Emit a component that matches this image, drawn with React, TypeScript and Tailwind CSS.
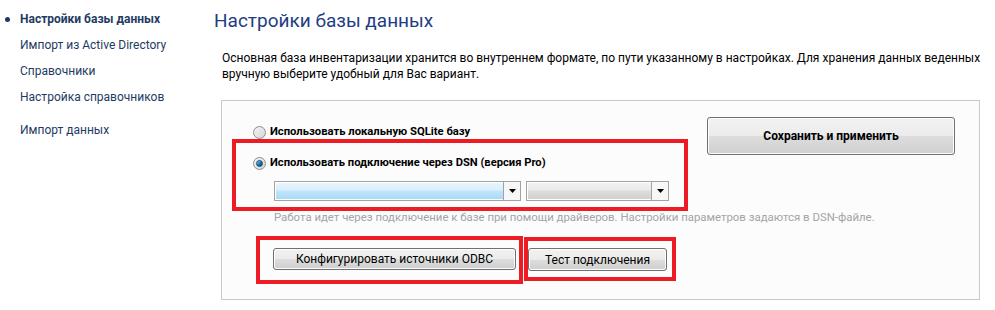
import React from 'react';

const navItems = [
    {label: 'Настройки базы данных', active: true},
    {label: 'Импорт из Active Directory'},
    {label: 'Справочники'},
    {label: 'Настройка справочников'},
    {label: 'Импорт данных', gap: true},
];

function Radio({checked}: { checked?: boolean }) {
    return (
        <span className="relative flex h-[13px] w-[13px] shrink-0 items-center justify-center rounded-full border border-[#8e8f8f] bg-gradient-to-br from-[#f4f4f4] to-[#d6d6d6]">
            {checked && (
                <span className="h-[7px] w-[7px] rounded-full border border-[#1b4a6e] bg-gradient-to-br from-[#8fd3fa] via-[#1f7ab8] to-[#0d3f63]"/>
            )}
        </span>
    );
}

function Select({width, blue}: { width: string; blue?: boolean }) {
    return (
        <div className={`flex h-[20px] ${width} border border-[#a3a3a3] shadow-[inset_0_0_0_1px_#ffffff] ${blue ? 'bg-[linear-gradient(#eaf6fd_0%,#d9f0fc_45%,#bee6fd_50%,#a7d9f5_100%)]' : 'bg-[linear-gradient(#f2f2f2_0%,#ebebeb_45%,#dddddd_50%,#cfcfcf_100%)]'}`}>
            <div className="flex-1"/>
            <div className="flex w-[17px] items-center justify-center border-l border-[#a3a3a3] bg-[#f7f7f7]">
                <svg width="7" height="4" viewBox="0 0 7 4"><path d="M0 0h7L3.5 4z" fill="#000"/></svg>
            </div>
        </div>
    );
}

function Button({children, className}: { children: React.ReactNode; className: string }) {
    return (
        <button
            type="button"
            className={`flex shrink-0 items-center justify-center rounded-[3px] border border-[#707070] bg-[linear-gradient(#f2f2f2_0%,#ebebeb_50%,#dddddd_51%,#cfcfcf_100%)] text-[12px] text-black shadow-[inset_0_0_0_1px_#fcfcfc] ${className}`}
        >
            {children}
        </button>
    );
}

export default function App() {
    return (
        <div className="flex h-[310px] w-[995px] bg-white font-['Roboto',sans-serif] text-[12px] text-black">
            <nav className="w-[213px] shrink-0 pt-[11px]">
                <ul>
                    {navItems.map(item => (
                        <li
                            key={item.label}
                            className={`relative flex h-[16px] items-center pl-[20px] text-[#1e3b63] ${item.gap ? 'mt-[17px]' : 'mt-[10px] first:mt-0'} ${item.active ? 'font-bold' : ''}`}
                        >
                            {item.active && <span className="absolute left-[5px] h-[5px] w-[5px] rounded-full bg-[#1e3b63]"/>}
                            {item.label}
                        </li>
                    ))}
                </ul>
            </nav>

            <main className="flex-1 pt-[9px]">
                <h1 className="h-[24px] pl-[1px] text-[19px] leading-[24px] text-[#1e3d84]">Настройки базы данных</h1>
                <p className="ml-[9px] mt-[17px] whitespace-nowrap leading-[16px]">
                    Основная база инвентаризации хранится во внутреннем формате, по пути указанному в настройках. Для хранения данных веденных
                    <br/>
                    вручную выберите удобный для Вас вариант.
                </p>

                <div className="relative ml-[8px] mt-[18px] flex h-[200px] w-[759px] border border-[#c9c9c9] bg-[#fcfcfc]">
                    <div className="w-[460px] shrink-0 pl-[31px] pt-[24px]">
                        <label className="flex h-[14px] items-center gap-[4px] whitespace-nowrap text-[11.25px] font-bold">
                            <Radio/>Использовать локальную SQLite базу
                        </label>
                        <label className="mt-[17px] flex h-[14px] items-center gap-[4px] whitespace-nowrap text-[11.2px] font-bold">
                            <Radio checked/>Использовать подключение через DSN (версия Pro)
                        </label>
                        <div className="ml-[21px] mt-[11px] flex gap-[5px]">
                            <Select width="w-[247px]" blue/>
                            <Select width="w-[143px]"/>
                        </div>
                        <p className="ml-[21px] mt-[9px] h-[14px] whitespace-nowrap text-[11.4px] leading-[14px] text-[#a4a4a4]">
                            Работа идет через подключение к базе при помощи драйверов. Настройки параметров задаются в DSN-файле.
                        </p>
                        <div className="ml-[20px] mt-[24px] flex gap-[12px]">
                            <Button className="h-[22px] w-[243px]">Конфигурировать источники ODBC</Button>
                            <Button className="h-[23px] w-[139px]">Тест подключения</Button>
                        </div>
                    </div>

                    <Button className="ml-auto mr-[24px] mt-[16px] h-[38px] w-[248px] font-bold">Сохранить и применить</Button>

                    {/* annotation frames */}
                    <div className="pointer-events-none absolute left-[10px] top-[38px] h-[72px] w-[456px] border-4 border-[#ed1c24]"/>
                    <div className="pointer-events-none absolute left-[34px] top-[135px] h-[48px] w-[267px] border-4 border-[#ed1c24]"/>
                    <div className="pointer-events-none absolute left-[302px] top-[136px] h-[44px] w-[152px] border-4 border-[#ed1c24]"/>
                </div>
            </main>
        </div>
    );
}
